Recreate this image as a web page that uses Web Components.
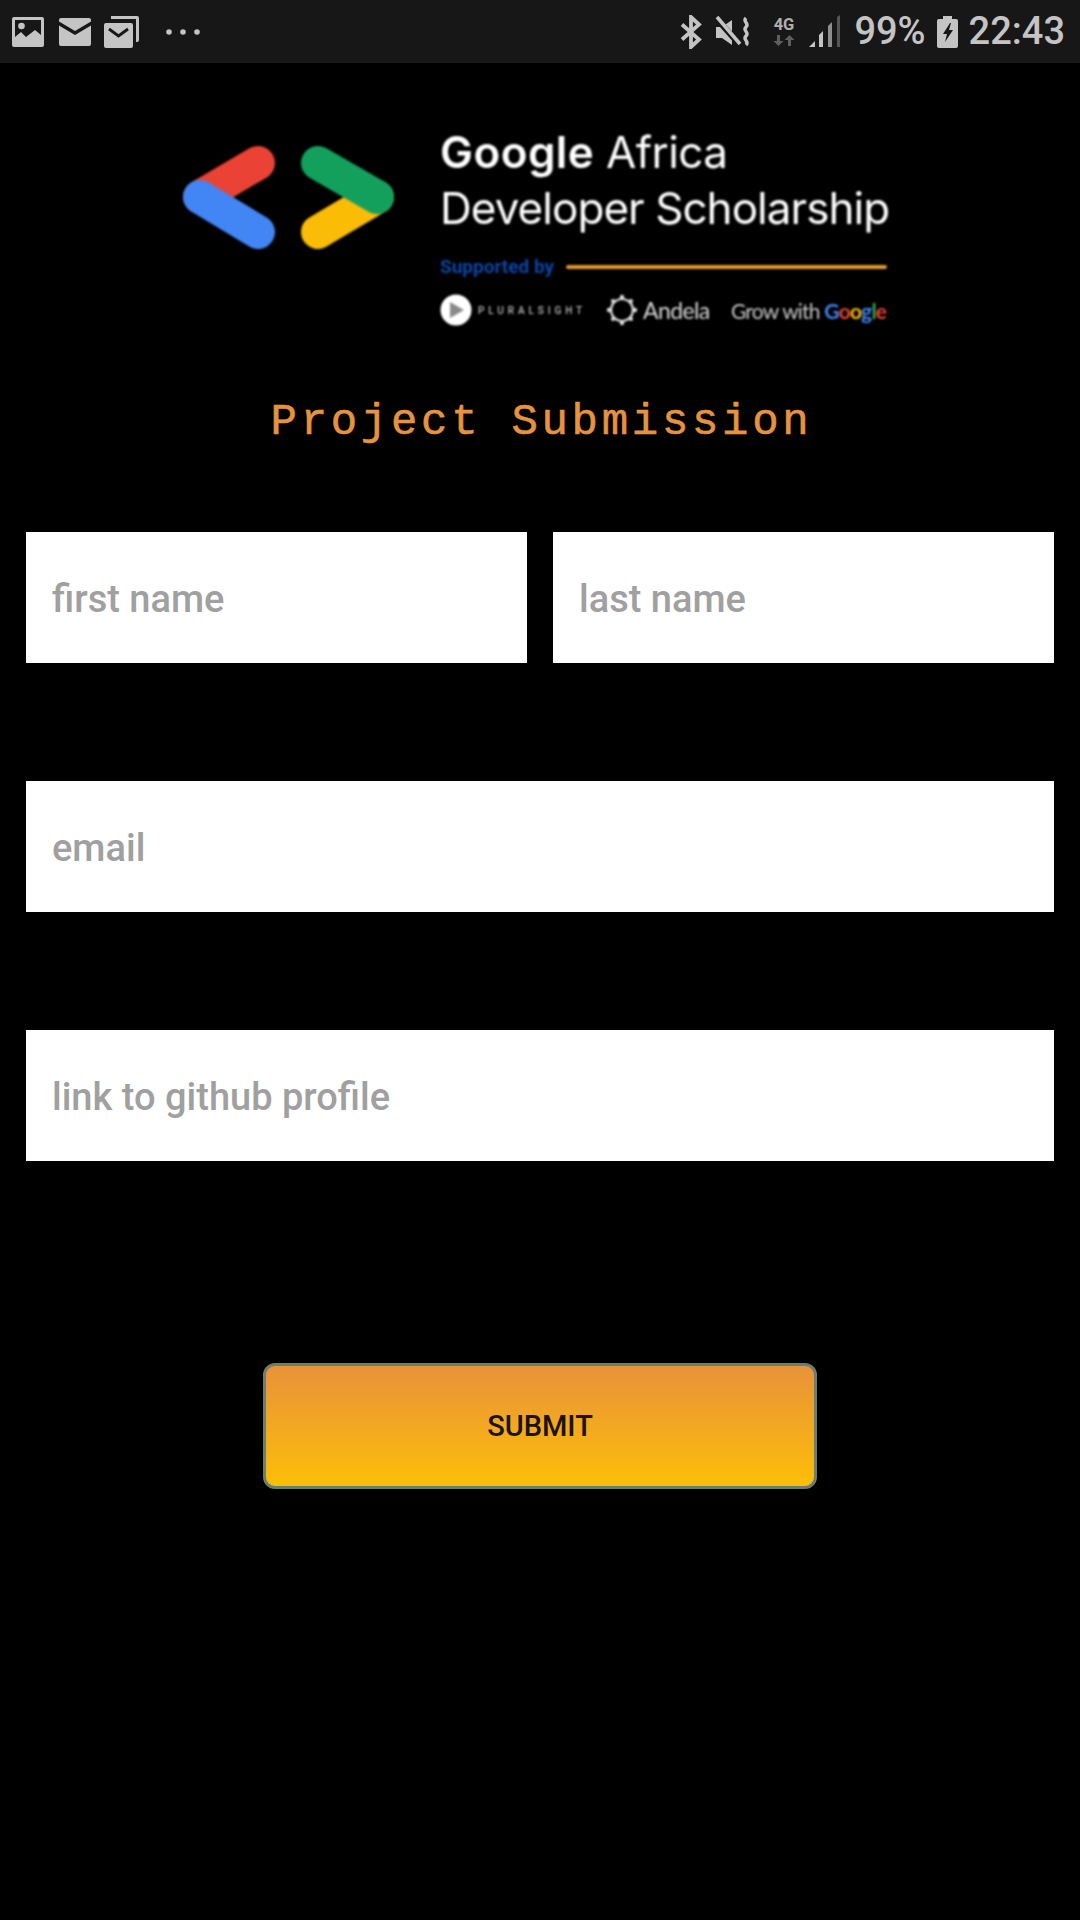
<!DOCTYPE html>
<html>
<head>
<meta charset="utf-8">
<title>Project Submission</title>
<style>
    html, body { margin: 0; background: #000; }
    body { width: 1080px; height: 1920px; overflow: hidden; font-family: Roboto, sans-serif; }
</style>
</head>
<body>
<status-bar></status-bar>
<scholarship-logo></scholarship-logo>
<page-title>Project Submission</page-title>
<submission-form>
    <form-field slot="first">first name</form-field>
    <form-field slot="last">last name</form-field>
    <form-field slot="email">email</form-field>
    <form-field slot="github">link to github profile</form-field>
    <submit-button slot="submit">SUBMIT</submit-button>
</submission-form>

<script>
class StatusBar extends HTMLElement {
    constructor() {
        super();
        this.attachShadow({ mode: "open" });
        this.shadowRoot.innerHTML = `
            <style>
                :host { display: flex; align-items: center; justify-content: space-between; height: 63px; background: #171717; color: #c4c4c4; padding: 0 15px 0 12px; box-sizing: border-box; }
                .side { display: flex; align-items: center; }
                svg { display: block; flex: none; }
                .txt { font: 500 38px/63px Roboto, sans-serif; letter-spacing: 0; }
            </style>
            <div class="side">
                <svg width="32" height="32" viewBox="0 0 32 32" fill="#c4c4c4"><path fill-rule="evenodd" d="M2 1h28a2 2 0 0 1 2 2v26a2 2 0 0 1-2 2H2a2 2 0 0 1-2-2V3a2 2 0 0 1 2-2zM3 4v17l6-5 5 5 9-7 6 5V4z"/><circle cx="9.500" cy="10" r="3.300"/></svg>
                <svg style="margin-left:15px" width="32" height="30" viewBox="0 0 32 30" fill="#c4c4c4"><path d="M0 4.500 16 14 32 4.500V3a2 2 0 0 0-2-2H2A2 2 0 0 0 0 3zM0 8.500V27a2 2 0 0 0 2 2h28a2 2 0 0 0 2-2V8.500L16 18z"/></svg>
                <svg style="margin-left:13px" width="36" height="32" viewBox="0 0 36 32" fill="#c4c4c4"><path d="M7 0h26a2 2 0 0 1 2 2v22a2 2 0 0 1-2 2h-1V3H7z"/><rect x="0" y="7" width="29" height="25" rx="2"/><path d="M5 13l9.500 7 9.500-7" fill="none" stroke="#171717" stroke-width="2.800"/></svg>
                <svg style="margin-left:26px" width="34" height="8" viewBox="0 0 34 8" fill="#c4c4c4"><circle cx="3" cy="4" r="2.800"/><circle cx="17" cy="4" r="2.800"/><circle cx="31" cy="4" r="2.800"/></svg>
            </div>
            <div class="side">
                <svg width="22" height="34" viewBox="0 0 22 34" fill="none" stroke="#c4c4c4" stroke-width="3.800"><path d="M2 9.500 19 24.500 11 32V2l8 7.500L2 24.500"/></svg>
                <svg style="margin-left:13px" width="36" height="34" viewBox="0 0 36 34"><path d="M1 12h6l10-7v25L7 23H1z" fill="#c4c4c4"/><path d="M1 3l24 27" stroke="#171717" stroke-width="6"/><path d="M2 2l23 27" stroke="#c4c4c4" stroke-width="3.600"/><path d="M30 2c-4 4 4 5 0 9s4 5 0 9 4 5 0 9" fill="none" stroke="#c4c4c4" stroke-width="3.400" transform="translate(1 1)"/></svg>
                <svg style="margin-left:18px" width="30" height="34" viewBox="0 0 30 34"><text x="15" y="15" text-anchor="middle" font-family="Roboto" font-weight="700" font-size="16.500" fill="#b0b0b0">4G</text><path d="M8 20v6H4.500l5 5 5-5H11v-6zM19 31v-6h-3.500l5-5 5 5H22v6z" fill="#5e5e5e"/></svg>
                <svg style="margin-left:9px" width="33" height="33" viewBox="0 0 33 33"><path d="M1 32l6-6v6z" fill="#c4c4c4"/><path d="M11 32V20l4-4v16z" fill="#c4c4c4"/><path d="M20 32V11l4-4v25z" fill="#8e8e8e"/><path d="M29 32V2l3-2v32z" fill="#555"/></svg>
                <span class="txt" style="margin-left:13px">99%</span>
                <svg style="margin-left:11px" width="21" height="32" viewBox="0 0 21 32"><path d="M6 0h9v3h4a2 2 0 0 1 2 2v25a2 2 0 0 1-2 2H2a2 2 0 0 1-2-2V5a2 2 0 0 1 2-2h4z" fill="#c4c4c4"/><path d="M13 7 6 18h4l-2 8 8-12h-4l2-7z" fill="#171717"/></svg>
                <span class="txt" style="margin-left:11px">22:43</span>
            </div>
        `;
    }
}

class ScholarshipLogo extends HTMLElement {
    constructor() {
        super();
        this.attachShadow({ mode: "open" });
        this.shadowRoot.innerHTML = `
            <style>
                :host { display: flex; height: 277px; box-sizing: border-box; padding: 61px 0 0 180px; filter: blur(0.9px); color: #fff; }
                .mark { display: block; flex: none; margin: 17px 0 0; }
                .words { margin-left: 37px; width: 447px; }
                .head { font: 400 44px/56px Inter, sans-serif; letter-spacing: -0.950px; white-space: nowrap; }
                .head b { font-weight: 600; letter-spacing: 0.450px; }
                .head.first { letter-spacing: -0.600px; }
                .support { display: flex; align-items: center; margin-top: 21px; }
                .support span { font: 700 19px/20px Roboto, sans-serif; color: #0b45a8; width: 126px; white-space: nowrap; }
                .support i { display: block; flex: 1; height: 4px; background: #e39a30; border-radius: 2px; }
                .partners { display: flex; align-items: center; margin-top: 15px; height: 36px; }
                .ps { font: 500 10px Roboto, sans-serif; letter-spacing: 3.900px; color: #b8b8b8; margin-left: 6px; width: 128px; white-space: nowrap; }
                .andela { font: 400 23px Lato, sans-serif; letter-spacing: -0.600px; color: #d8d8d8; margin-left: 5px; width: 88px; }
                .grow { font: 400 21px Lato, sans-serif; letter-spacing: -0.800px; color: #c8c8c8; white-space: nowrap; }
                .grow b { font-weight: 700; }
            </style>
            <svg class="mark" width="223" height="124" viewBox="0 0 223 124" fill="none" stroke-linecap="round" stroke-width="34">
                <path d="M78 22 20 56" stroke="#ea4335"/>
                <path d="M20 56 78 91" stroke="#4285f4"/>
                <path d="M138 91 197 56" stroke="#fbbc05"/>
                <path d="M138 22 197 56" stroke="#12a05c"/>
            </svg>
            <div class="words">
                <div class="head first"><b>Google</b> Africa</div>
                <div class="head">Developer Scholarship</div>
                <div class="support"><span>Supported by</span><i></i></div>
                <div class="partners">
                    <svg width="32" height="32" viewBox="0 0 32 32"><circle cx="16" cy="16" r="15.500" fill="#fff"/><path d="M10 8l14 8-14 8z" fill="#8a8a8a"/></svg>
                    <span class="ps">PLURALSIGHT</span>
                    <svg width="32" height="32" viewBox="0 0 32 32" fill="none"><circle cx="16" cy="16" r="11" stroke="#e0e0e0" stroke-width="2.200"/><g fill="#e0e0e0"><circle cx="16" cy="3" r="2.200"/><circle cx="16" cy="29" r="2.200"/><circle cx="3" cy="16" r="2.200"/><circle cx="29" cy="16" r="2.200"/><circle cx="7" cy="7" r="2"/><circle cx="25" cy="7" r="2"/><circle cx="7" cy="25" r="2"/><circle cx="25" cy="25" r="2"/></g></svg>
                    <span class="andela">Andela</span>
                    <span class="grow">Grow with <b style="color:#4285f4">G</b><b style="color:#ea4335">o</b><b style="color:#fbbc05">o</b><b style="color:#4285f4">g</b><b style="color:#34a853">l</b><b style="color:#ea4335">e</b></span>
                </div>
            </div>
        `;
    }
}

class PageTitle extends HTMLElement {
    constructor() {
        super();
        this.attachShadow({ mode: "open" });
        this.shadowRoot.innerHTML = `
            <style>
                :host { display: block; text-align: center; font: 400 44px/50px "Liberation Mono", monospace; letter-spacing: 3.700px; color: #e5933f; -webkit-text-stroke: 0.600px #e5933f; margin-top: 57px; padding-left: 3px; }
            </style>
            <slot></slot>
        `;
    }
}

class SubmissionForm extends HTMLElement {
    constructor() {
        super();
        this.attachShadow({ mode: "open" });
        this.shadowRoot.innerHTML = `
            <style>
                :host { display: flex; flex-direction: column; padding: 85px 26px 0; }
                .row { display: grid; grid-template-columns: 1fr 1fr; column-gap: 26px; }
                .stack { display: flex; flex-direction: column; gap: 118px; }
                .action { display: flex; justify-content: center; margin-top: 202px; }
            </style>
            <div class="stack">
                <div class="row"><slot name="first"></slot><slot name="last"></slot></div>
                <slot name="email"></slot>
                <slot name="github"></slot>
            </div>
            <div class="action"><slot name="submit"></slot></div>
        `;
    }
}

class FormField extends HTMLElement {
    constructor() {
        super();
        this.attachShadow({ mode: "open" });
        this.shadowRoot.innerHTML = `
            <style>
                :host { display: flex; align-items: center; height: 131px; box-sizing: border-box; padding: 2px 26px 0; background: #fff; color: #a0a0a0; font: 500 38px Roboto, sans-serif; }
            </style>
            <slot></slot>
        `;
    }
}

class SubmitButton extends HTMLElement {
    constructor() {
        super();
        this.attachShadow({ mode: "open" });
        this.shadowRoot.innerHTML = `
            <style>
                :host { display: flex; align-items: center; justify-content: center; width: 554px; height: 126px; box-sizing: border-box; border: 3px solid #6b7f70; border-radius: 12px; background: linear-gradient(#e8923a, #fdbe08); color: #1c1206; font: 500 29px Roboto, sans-serif; }
            </style>
            <slot></slot>
        `;
    }
}

customElements.define("status-bar", StatusBar);
customElements.define("scholarship-logo", ScholarshipLogo);
customElements.define("page-title", PageTitle);
customElements.define("submission-form", SubmissionForm);
customElements.define("form-field", FormField);
customElements.define("submit-button", SubmitButton);
</script>
</body>
</html>
